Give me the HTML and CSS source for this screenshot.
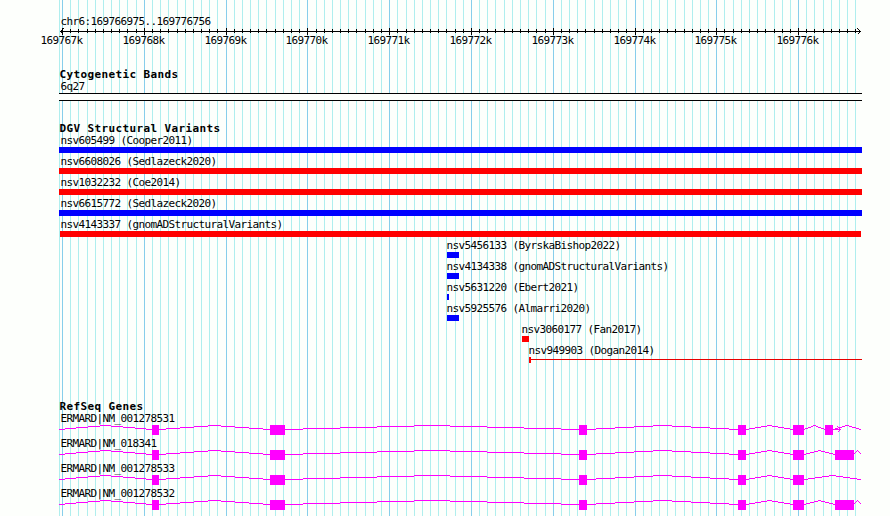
FILE: index.html
```html
<!DOCTYPE html>
<html lang="en">
<head>
    <meta charset="UTF-8">
    <meta name="viewport" content="width=device-width, initial-scale=1.0">
    <title>chr6:169766975..169776756</title>
    <link rel="stylesheet" href="styles.css">
</head>
<body>
    <div class="browser">
        <svg class="grid" id="grid" width="803" height="516"></svg>

        <header class="region">
            <div class="label">chr6:169766975..169776756</div>
            <svg class="ruler" id="ruler" width="803" height="20"></svg>
        </header>

        <section class="track cytobands">
            <h2>Cytogenetic Bands</h2>
            <div class="label">6q27</div>
            <div class="band"></div>
        </section>

        <section class="track variants">
            <h2>DGV Structural Variants</h2>
            <div id="variants"></div>
        </section>

        <section class="track genes">
            <h2>RefSeq Genes</h2>
            <div id="genes"></div>
        </section>
    </div>

    <script src="script.js"></script>
</body>
</html>
```

FILE: styles.css
```css
body {
    margin: 0;
    background-color: #fdfffc;
    color: #000;
    font-family: "DejaVu Sans Mono", "Liberation Mono", monospace;
    font-size: 11px;
    overflow: hidden;
}
svg {
    display: block;
    overflow: visible;
    shape-rendering: crispEdges;
}
.browser {
    position: relative;
    width: 803px;
    height: 501px;
    margin-left: 59px;
    padding-top: 15px;
}
/* guide lines run behind every track */
.grid {
    position: absolute;
    top: 0;
    left: 0;
    z-index: -1;
}
.minor {
    fill: #afeeee;
}
.major {
    fill: #87ceeb;
}
.label {
    height: 13px;
    line-height: 13px;
    padding-left: 1.5px;
    letter-spacing: -0.622px;
    white-space: pre;
}
.ruler path {
    fill: none;
    stroke: #000;
}
.ruler text {
    letter-spacing: -0.622px;
}
.track h2 {
    margin: 0;
    height: 12px;
    line-height: 13px;
    padding-left: 0.5px;
    font-size: 11px;
    font-weight: bold;
    letter-spacing: 0.378px;
    white-space: pre;
}
.cytobands {
    margin-top: 20px;
}
.band {
    box-sizing: border-box;
    height: 8px;
    border-top: 1px solid #000;
    border-bottom: 1px solid #000;
    background-color: #fdfffc;
}
.variants {
    margin-top: 21px;
}
.variant {
    height: 21px;
}
.variant.inset .label {
    margin-left: -1px;
    padding-left: 0.5px;
}
.variant.clipped .label {
    padding-left: 0.5px;
}
.glyph {
    display: flex;
    align-items: center;
    height: 6px;
}
.bar {
    height: 6px;
}
.tail {
    flex: 1;
    height: 1px;
    margin-top: -1px;
}
.gain {
    background-color: #0000ff;
}
.loss {
    background-color: #ff0000;
}
.tail.loss {
    background-color: #e60000;
}
.genes {
    margin-top: 35px;
}
.gene {
    height: 25px;
}
.exon {
    fill: #ff00ff;
}
.intron {
    fill: none;
    stroke: #ff00ff;
}
```

FILE: script.js
```js
// x positions are pixels from the left edge of the region
const FIRST = 3.04;
const STEP = 8.178;

const variants = [
    { name: 'nsv605499 (Cooper2011)', type: 'gain', x: 0, width: 803 },
    { name: 'nsv6608026 (Sedlazeck2020)', type: 'loss', x: 0, width: 803 },
    { name: 'nsv1032232 (Coe2014)', type: 'loss', x: 0, width: 803 },
    { name: 'nsv6615772 (Sedlazeck2020)', type: 'gain', x: 0, width: 803 },
    { name: 'nsv4143337 (gnomADStructuralVariants)', type: 'loss', x: 1, width: 801 },
    { name: 'nsv5456133 (ByrskaBishop2022)', type: 'gain', x: 388, width: 12 },
    { name: 'nsv4134338 (gnomADStructuralVariants)', type: 'gain', x: 388, width: 12 },
    { name: 'nsv5631220 (Ebert2021)', type: 'gain', x: 388, width: 2 },
    { name: 'nsv5925576 (Almarri2020)', type: 'gain', x: 388, width: 12 },
    { name: 'nsv3060177 (Fan2017)', type: 'loss', x: 463, width: 7 },
    { name: 'nsv949903 (Dogan2014)', type: 'loss', x: 470, width: 2, tail: true }
];

const shared = [[93, 100], [211, 226], [520, 528], [679, 687], [734, 745]];
const genes = [
    { name: 'ERMARD|NM_001278531', exons: [...shared, [766, 774]], arrow: true },
    { name: 'ERMARD|NM_018341', exons: [...shared, [776, 795]] },
    { name: 'ERMARD|NM_001278533', exons: shared },
    { name: 'ERMARD|NM_001278532', exons: [...shared, [776, 795]] }
];

function drawScale() {
    let lines = '<rect class="minor" x="0" y="0" width="1" height="516"/>';
    let ticks = 'M1 3.5H802 M4.5 0.5L1.5 3.5L4.5 6.5 M798.5 0.5L801.5 3.5L798.5 6.5';
    let labels = '';

    for (let i = 0; i <= 97; i++) {
        const x = Math.round(FIRST + i * STEP);
        const major = i % 10 === 0;
        lines += `<rect class="${major ? 'major' : 'minor'}" x="${x}" y="0" width="1" height="516"/>`;
        ticks += major ? ` M${x + 0.5} 0V7` : ` M${x + 0.5} 1V5`;
        if (major) {
            labels += `<text x="${x - 21.5}" y="16">${169767 + i / 10}k</text>`;
        }
    }

    document.getElementById('grid').innerHTML = lines;
    document.getElementById('ruler').innerHTML = `<path d="${ticks}"/>${labels}`;
}

function drawVariants() {
    document.getElementById('variants').innerHTML = variants.map(v => {
        const kind = v.x > 1 ? 'inset' : v.x === 1 ? 'clipped' : '';
        return `
            <div class="variant ${kind}" style="margin-left: ${v.x}px">
                <div class="label">${v.name}</div>
                <div class="glyph">
                    <div class="bar ${v.type}" style="width: ${v.width}px"></div>
                    ${v.tail ? `<div class="tail ${v.type}"></div>` : ''}
                </div>
            </div>`;
    }).join('');
}

// Introns are drawn as a shallow stepped peak between two exons
function intron(from, to) {
    const half = (to - from) / 2;
    let path = '';
    let start = from;
    [0, 1, 2, 3, 4, 3, 2, 1, 0].forEach((level, i) => {
        const end = i === 8 ? to : Math.round(from + half * (i + 0.5) / 4);
        path += `M${start} ${4.5 - level}H${end}`;
        start = end;
    });
    return path;
}

function drawGenes() {
    document.getElementById('genes').innerHTML = genes.map(g => {
        let start = 0;
        let path = '';
        let boxes = '';
        g.exons.forEach(([a, b]) => {
            path += intron(start, a);
            boxes += `<rect class="exon" x="${a}" y="0" width="${b - a}" height="10"/>`;
            start = b;
        });
        path += intron(start, 802);
        if (g.arrow) {
            path += 'M774 4.5H781M778.5 1.5L781.5 4.5L778.5 7.5';
        }
        return `
            <div class="gene">
                <div class="label">${g.name}</div>
                <svg width="803" height="10"><path class="intron" d="${path}"/>${boxes}</svg>
            </div>`;
    }).join('');
}

drawScale();
drawVariants();
drawGenes();
```
